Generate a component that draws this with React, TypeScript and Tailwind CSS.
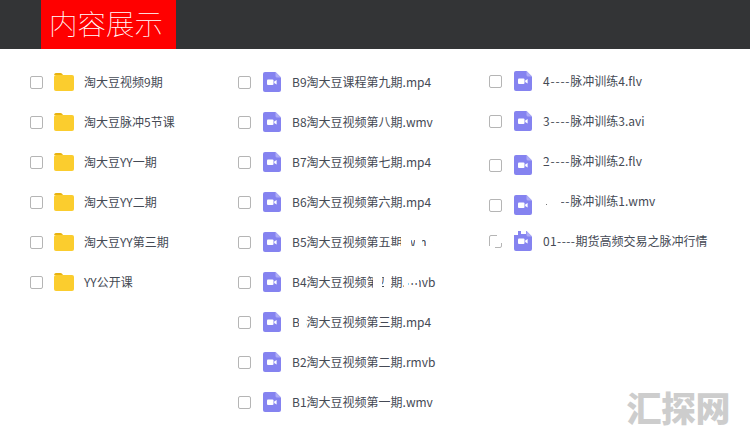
import type { ReactNode } from "react";

const FONT = "font-['Microsoft_YaHei','Noto_Sans_CJK_SC','Noto_Sans',sans-serif]";

function Folder() {
  return (
    <svg width="20" height="18" viewBox="0 0 20 18" className="shrink-0">
      <path d="M0 3 Q0 0 2 0 H6.5 Q8 0 9 2 H0 Z" fill="#e8b30f" />
      <path d="M0 4 Q0 2 2 2 H18 Q20 2 20 4 V16 Q20 18 18 18 H2 Q0 18 0 16 Z" fill="#fbcd2e" />
    </svg>
  );
}

function Video() {
  return (
    <svg width="18" height="20" viewBox="0 0 18 20" className="shrink-0">
      <path d="M2 0 H12.5 L18 5.5 V18 Q18 20 16 20 H2 Q0 20 0 18 V2 Q0 0 2 0 Z" fill="#8583f0" />
      <path d="M12.5 0 L18 5.5 H14 Q12.5 5.5 12.5 4 Z" fill="#aeacf6" />
      <rect x="4" y="7.5" width="6.5" height="5.5" rx="1" fill="#fff" />
      <path d="M11.2 9.6 L13.6 8 V12.6 L11.2 11 Z" fill="#fff" />
    </svg>
  );
}

function Row({ kind, label, cls, labelCls }: { kind: "f" | "v"; label: ReactNode; cls?: string; labelCls?: string }) {
  return (
    <div className={`flex h-5 items-center ${cls ?? ""}`}>
      <span className="h-[13px] w-[13px] shrink-0 rounded-[2px] border border-[#b5b5b5] bg-white" />
      {kind === "f" ? (
        <span className="ml-[11px] mr-[10px] flex"><Folder /></span>
      ) : (
        <span className="ml-[12px] mr-[11px] flex"><Video /></span>
      )}
      <span className={`whitespace-nowrap text-[12px] leading-5 text-[#454a55] ${labelCls ?? ""}`}>{label}</span>
    </div>
  );
}

function Pulse({ head, tail, wide }: { head: string; tail: string; wide?: boolean }) {
  return (
    <>
      <span className={wide ? "tracking-[0.4px]" : "tracking-[0.8px]"}>{head}</span>
      {tail}
    </>
  );
}

/* The white erasure marks that lie over the list in the picture. */
function Retouch() {
  const marks: [number, number, number, number][] = [
    [391, 246, 42, 4], [401, 236, 10, 10], [415, 236, 7, 10], [426, 236, 7, 10],
    [373, 276, 9, 12], [384, 276, 7, 12], [404, 276, 15, 7], [404, 285, 15, 4], [404, 283, 4, 2],
    [299, 316, 7, 12],
    [543, 163, 7, 2], [543, 195, 18, 12],
    [497, 233, 7, 10], [488, 246, 7, 4],
    [514, 231, 4, 4], [521, 231, 5, 3],
  ];
  return (
    <svg width="750" height="432" viewBox="0 0 750 432" className="pointer-events-none absolute inset-0">
      {marks.map(([x, y, w, h]) => (
        <rect key={`${x}-${y}`} x={x} y={y} width={w} height={h} fill="#fff" />
      ))}
      <rect x="546" y="204" width="1" height="1" fill="#777" />
    </svg>
  );
}

const col1 = ["淘大豆视频9期", "淘大豆脉冲5节课", "淘大豆YY一期", "淘大豆YY二期", "淘大豆YY第三期", "YY公开课"];
const col2 = [
  "B9淘大豆课程第九期.mp4",
  "B8淘大豆视频第八期.wmv",
  "B7淘大豆视频第七期.mp4",
  "B6淘大豆视频第六期.mp4",
  "B5淘大豆视频第五期.wmv",
  "B4淘大豆视频第四期.rmvb",
  "B3淘大豆视频第三期.mp4",
  "B2淘大豆视频第二期.rmvb",
  "B1淘大豆视频第一期.wmv",
];

export default function App() {
  return (
    <div className={`relative h-[432px] w-[750px] overflow-hidden bg-white ${FONT}`}>
      <header className="h-[49px] bg-[#333436] pl-[41px]">
        <div className="flex h-[49px] w-[135px] items-center pb-[2px] pl-[8px] text-[28.5px] font-thin leading-none text-white bg-[#ff0000]">
          内容展示
        </div>
      </header>
      <main className="flex pt-[23px]">
        <div className="ml-[30px] flex w-[208px] flex-col gap-5">
          {col1.map((t) => <Row key={t} kind="f" label={t} />)}
        </div>
        <div className="flex w-[251px] flex-col gap-5">
          {col2.map((t) => <Row key={t} kind="v" label={t} />)}
        </div>
        <div className="-mt-px flex flex-col">
          <Row kind="v" label={<Pulse head="4----" tail="脉冲训练4.flv" />} />
          <Row kind="v" cls="mt-5" label={<Pulse head="3----" tail="脉冲训练3.avi" />} />
          <Row kind="v" cls="mt-6" label={<Pulse head="2----" tail="脉冲训练2.flv" />} labelCls="mb-2" />
          <Row kind="v" cls="mt-5" label={<Pulse head="1----" tail="脉冲训练1.wmv" />} labelCls="mb-2" />
          <Row kind="v" cls="mt-4" label={<Pulse wide head="01----" tail="期货高频交易之脉冲行情" />} />
        </div>
      </main>
      <Retouch />
      <div className="absolute bottom-[5px] right-[20px] text-[35px] font-black leading-[40px] tracking-[-0.5px] text-[#cdcdcd]">
        汇探网
      </div>
    </div>
  );
}
